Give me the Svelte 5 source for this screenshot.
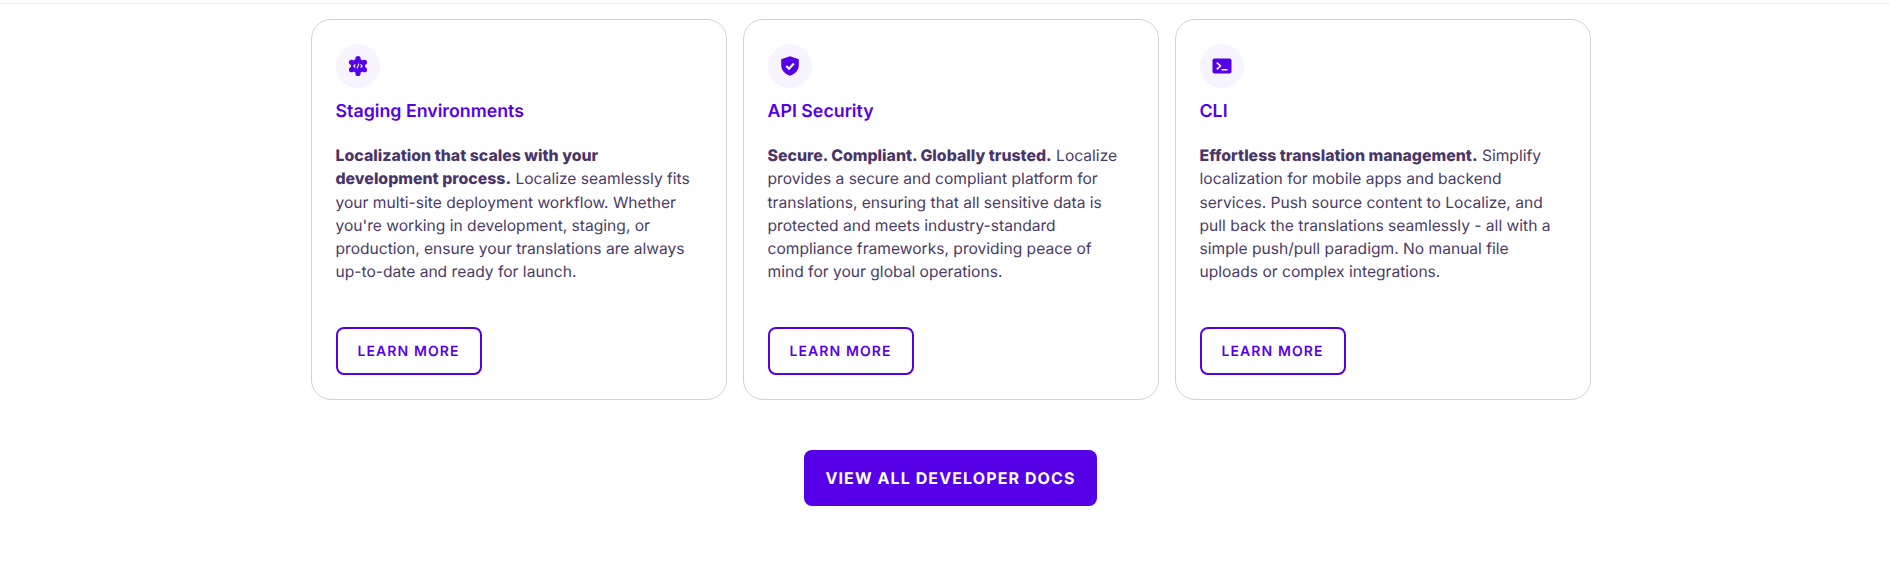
<script>
    const cards = [
        {
            title: 'Staging Environments',
            lead: 'Localization that scales with your development process.',
            text: " Localize seamlessly fits your multi-site deployment workflow. Whether you're working in development, staging, or production, ensure your translations are always up-to-date and ready for launch.",
            icon: 'staging'
        },
        {
            title: 'API Security',
            lead: 'Secure. Compliant. Globally trusted.',
            text: ' Localize provides a secure and compliant platform for translations, ensuring that all sensitive data is protected and meets industry-standard compliance frameworks, providing peace of mind for your global operations.',
            icon: 'shield'
        },
        {
            title: 'CLI',
            lead: 'Effortless translation management.',
            text: ' Simplify localization for mobile apps and backend services. Push source content to Localize, and pull back the translations seamlessly - all with a simple push/pull paradigm. No manual file uploads or complex integrations.',
            icon: 'cli'
        }
    ];
    // six lobes round the gear
    const lobes = [0, 60, 120, 180, 240, 300].map((a) => ({
        x: 10 + 7.4 * Math.sin((a * Math.PI) / 180),
        y: 10 - 7.4 * Math.cos((a * Math.PI) / 180)
    }));
</script>

<div class="page">
    <div class="cards">
        {#each cards as card}
            <div class="card">
                <div class="icon">
                    {#if card.icon === 'staging'}
                        <svg width="20" height="20" viewBox="0 0 20 20">
                            <circle cx="10" cy="10" r="7.200" fill="#5600e8"/>
                            {#each lobes as l}
                                <circle cx={l.x} cy={l.y} r="2.600" fill="#5600e8"/>
                            {/each}
                            <path fill="none" stroke="#fff" stroke-width="1.100" d="M7.400 8.300 5.800 10l1.600 1.700M12.600 8.300l1.600 1.700-1.600 1.700M10.800 7.600 9.200 12.400"/>
                        </svg>
                    {:else if card.icon === 'shield'}
                        <svg width="20" height="20" viewBox="0 0 20 20">
                            <path fill="#5600e8" d="M10 0.300 18.800 3.300v5.900c0 4.800-3.600 8.700-8.800 10.500-5.200-1.800-8.800-5.700-8.800-10.500V3.300z"/>
                            <path fill="none" stroke="#fff" stroke-width="2.100" d="M6.300 10 9 12.700l4.900-5.100"/>
                        </svg>
                    {:else}
                        <svg width="20" height="20" viewBox="0 0 20 20">
                            <rect x="0.500" y="2.500" width="19" height="15" rx="2" fill="#5600e8"/>
                            <path fill="none" stroke="#fff" stroke-width="1.500" d="M4.800 6.600 8.500 10l-3.700 3.400M9.500 13.700h6"/>
                        </svg>
                    {/if}
                </div>
                <h3>{card.title}</h3>
                <p><strong>{card.lead}</strong>{card.text}</p>
                <a class="learn" href="#learn">LEARN MORE</a>
            </div>
        {/each}
    </div>
    <a class="all" href="#docs">VIEW ALL DEVELOPER DOCS</a>
</div>

<style>
    :global(body) {
        margin: 0;
        background: #fff;
    }
    .page {
        height: 583px;
        box-sizing: border-box;
        display: flex;
        flex-direction: column;
        align-items: center;
        padding: 19px 0 0 11px;
        font-family: Inter, "Liberation Sans", sans-serif;
        text-rendering: geometricPrecision;
        position: relative;
    }
    .page::before {
        content: "";
        position: absolute;
        top: 3px;
        left: 0;
        right: 0;
        height: 1px;
        background: #f1f1f3;
    }
    .cards {
        display: grid;
        grid-template-columns: repeat(3, 416px);
        gap: 16px;
    }
    .card {
        box-sizing: border-box;
        height: 381px;
        border: 1px solid #d2d2da;
        border-radius: 20px;
        padding: 24px;
        display: flex;
        flex-direction: column;
        align-items: flex-start;
    }
    .icon {
        width: 44px;
        height: 44px;
        border-radius: 50%;
        background: #f7f4ff;
        display: flex;
        align-items: center;
        justify-content: center;
    }
    h3 {
        margin: 10px 0 0;
        font-size: 17.800px;
        line-height: 28px;
        font-weight: 600;
        color: #5600e8;
    }
    p {
        margin: 18px 0 0;
        max-width: 358px;
        font-size: 15.600px;
        line-height: 23.300px;
        color: #4a3a66;
    }
    strong {
        font-size: 15.870px;
        font-weight: 800;
        color: #4a3568;
    }
    .learn {
        margin-top: auto;
        box-sizing: border-box;
        height: 48px;
        width: 146px;
        border: 2px solid #5600e8;
        border-radius: 8px;
        display: flex;
        align-items: center;
        justify-content: center;
        color: #5600e8;
        font-size: 14px;
        font-weight: 600;
        letter-spacing: 1.100px;
        text-decoration: none;
    }
    .all {
        margin-top: 50px;
        box-sizing: border-box;
        width: 293px;
        height: 56px;
        border-radius: 8px;
        background: #5600e8;
        color: #fff;
        display: flex;
        align-items: center;
        justify-content: center;
        font-size: 16px;
        font-weight: 700;
        letter-spacing: 1.100px;
        text-decoration: none;
    }
</style>
